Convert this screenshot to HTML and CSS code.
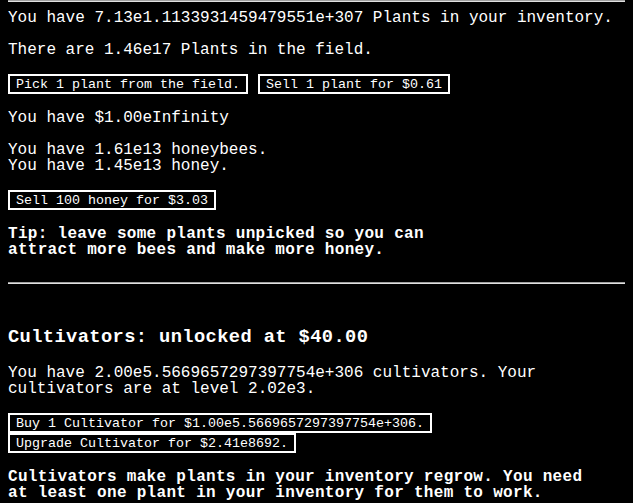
FILE: index.html
```html
<!DOCTYPE html>
<html lang="en">
<head>
  <meta charset="UTF-8" />
  <title>Plants</title>
  <link rel="stylesheet" href="styles.css">
</head>
<body>
  <hr class="rule rule-top">

  <p>You have <span id="plants">7.13e1.1133931459479551e+307</span> Plants in your inventory.</p>
  <p>There are <span id="field">1.46e17</span> Plants in the field.</p>

  <div class="actions">
    <button class="btn" id="pickBtn">Pick 1 plant from the field.</button>
    <button class="btn" id="sellBtn">Sell 1 plant for $0.61</button>
  </div>

  <p>You have $<span id="money">1.00eInfinity</span></p>

  <p>You have <span id="bees">1.61e13</span> honeybees.<br>
  You have <span id="honey">1.45e13</span> honey.</p>

  <div class="actions">
    <button class="btn" id="honeyBtn">Sell 100 honey for $3.03</button>
  </div>

  <p class="tip">Tip: leave some plants unpicked so you can<br>
  attract more bees and make more honey.</p>

  <hr class="rule">

  <h3>Cultivators: unlocked at $40.00</h3>

  <p>You have <span id="cultivators">2.00e5.5669657297397754e+306</span> cultivators. Your cultivators are at level <span id="level">2.02e3</span>.</p>

  <div class="actions stack">
    <button class="btn" id="buyBtn">Buy 1 Cultivator for $1.00e5.5669657297397754e+306.</button>
    <button class="btn" id="upgradeBtn">Upgrade Cultivator for $2.41e8692.</button>
  </div>

  <p class="tip">Cultivators make plants in your inventory regrow. You need<br>
  at least one plant in your inventory for them to work.</p>
</body>
</html>
```

FILE: styles.css
```css
body {
  margin: 0;
  padding: 0 8px;
  background-color: #000;
  color: #fff;
  font-family: "Liberation Mono", "DejaVu Sans Mono", monospace;
  font-size: 16px;
  line-height: 16px;
  overflow: hidden;
}

p {
  margin: 16px 0;
}

.rule {
  height: 0;
  margin: 24px 0 0;
  border: none;
  border-top: 1px solid #a0a0a0;
  border-bottom: 1px solid #e0e0e0;
}

.rule-top {
  margin: 0 0 -8px;
}

.actions {
  display: flex;
  gap: 10px;
  align-items: flex-start;
  margin: 16px 0;
}

.actions.stack {
  flex-direction: column;
  gap: 0;
}

.btn {
  background-color: #000;
  color: #fff;
  border: 2px solid #fff;
  border-radius: 0;
  padding: 2px 6px 0;
  margin: 0;
  font-family: "Liberation Mono", "DejaVu Sans Mono", monospace;
  font-size: 13.333px;
  line-height: 14px;
  height: 20px;
  white-space: nowrap;
  cursor: pointer;
}

.tip {
  font-weight: bold;
  letter-spacing: 0.3px;
}

h3 {
  font-size: 18.72px;
  line-height: 22px;
  letter-spacing: 0.4px;
  margin: 42px 0 17px;
}
```
